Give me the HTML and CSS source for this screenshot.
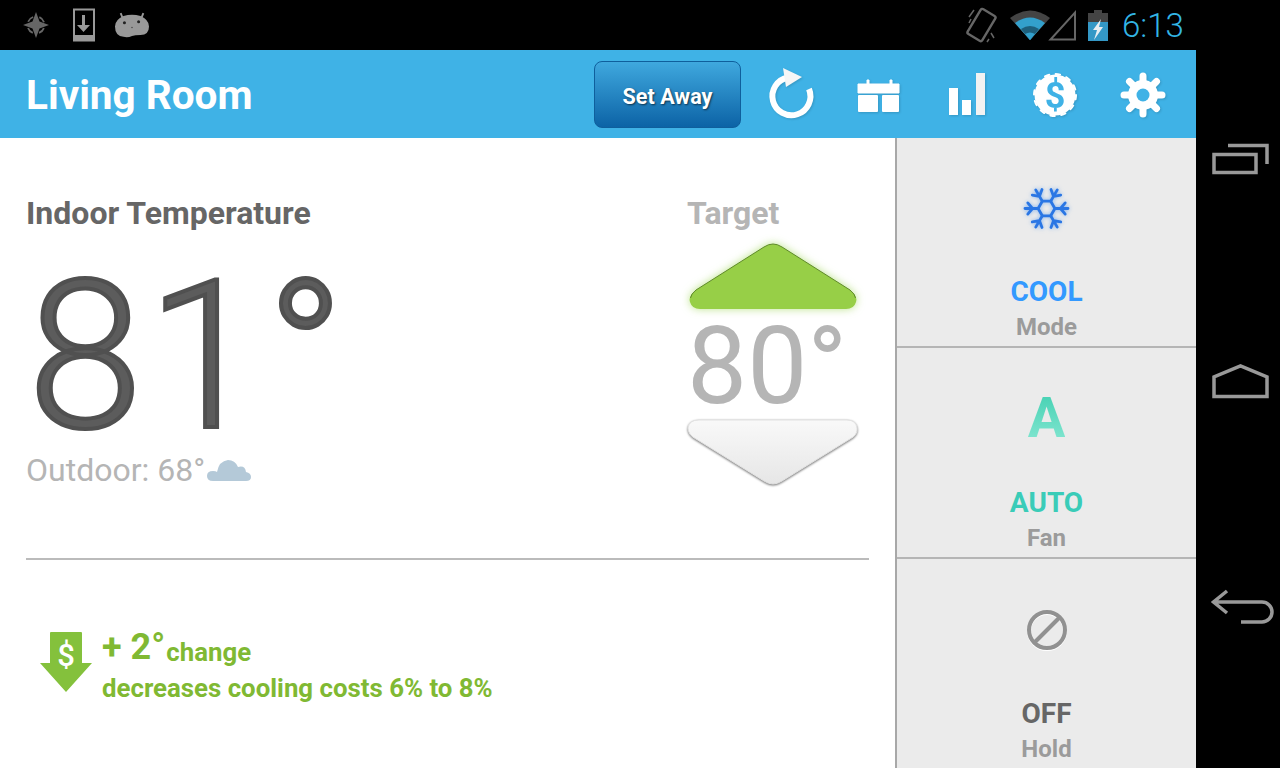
FILE: index.html
```html
<!DOCTYPE html>
<html lang="en">

<head>
    <meta charset="UTF-8">
    <title>Living Room</title>
    <link rel="stylesheet" href="styles.css">
</head>

<body>
    <div class="screen">
        <!-- status bar -->
        <div class="status-bar">
            <svg class="ic-compass" width="28" height="28" viewBox="0 0 28 28">
                <circle cx="14" cy="14" r="8.5" fill="none" stroke="#666" stroke-width="1.8" stroke-dasharray="7 6.35" stroke-dashoffset="-3.18"/>
                <path d="M14 1 L17.5 10.5 L27 14 L17.5 17.5 L14 27 L10.5 17.5 L1 14 L10.5 10.5 Z" fill="#666"/>
            </svg>
            <svg class="ic-download" width="24" height="34" viewBox="0 0 24 34">
                <path d="M2 1.5 H22 V32 H2 Z" fill="none" stroke="#999" stroke-width="2"/>
                <rect x="1" y="27" width="22" height="6.5" fill="#999"/>
                <path d="M10 7 H13 V17 H18 L11.5 24 L5 17 H10 Z" fill="#999"/>
            </svg>
            <svg class="ic-android" width="34" height="27" viewBox="0 0 36 28">
                <path d="M8 6 L6 1 M28 6 L30 1" stroke="#999" stroke-width="2"/>
                <path d="M9 4 Q18 1 27 4 Q36 8 36 15 Q36 24 27 24 Q21 24 18 25 Q14 27 9 26 Q0 25 0 15 Q0 8 9 4 Z" fill="#999"/>
                <circle cx="10" cy="11" r="1.6" fill="#222"/>
                <circle cx="25" cy="10" r="1.6" fill="#222"/>
                <circle cx="18" cy="16" r="0.8" fill="#444"/>
            </svg>

            <div class="status-spacer"></div>

            <svg class="ic-vibrate" width="32" height="34" viewBox="0 0 32 34">
                <rect x="6" y="2.5" width="17" height="29" rx="2" transform="rotate(31 14.5 17)" fill="none" stroke="#666" stroke-width="2.4"/>
                <path d="M7 2 L2 9 M4 11 L2 15 M24 25 L27 30 M22 31 L20 34" stroke="#666" stroke-width="1.5"/>
            </svg>
            <svg class="ic-wifi" width="40" height="32" viewBox="0 0 40 32">
                <path d="M20 31 L0 9 Q20 -6 40 9 Z" fill="#444"/>
                <path d="M20 31 L5 14 Q20 3 35 14 Z" fill="#33a0cc"/>
                <path d="M20 31 L11 20 Q20 14 29 20 Z" fill="#1d5f7c"/>
                <path d="M20 31 L15 25 Q20 22 25 25 Z" fill="#33a0cc"/>
            </svg>
            <svg class="ic-signal" width="29" height="32" viewBox="0 0 29 32">
                <path d="M27 3.5 V30.5 H2.5 Z" fill="none" stroke="#666" stroke-width="2"/>
            </svg>
            <svg class="ic-battery" width="20" height="31" viewBox="0 0 20 31">
                <path d="M6 0 H14 V3 H20 V31 H0 V3 H6 Z" fill="#444"/>
                <rect y="12" width="20" height="19" fill="#3498c6"/>
                <path d="M13 9 L5 20 H9 L6 30 L15 17 H11 L13 9 Z" fill="#e8eef2"/>
            </svg>
            <span class="clock">6:13</span>
        </div>

        <!-- action bar -->
        <header class="action-bar">
            <h1 class="room-title">Living Room</h1>
            <button class="away-btn" type="button">Set Away</button>

            <div class="action-icon">
                <svg width="48" height="48" viewBox="0 0 48 48">
                    <path d="M21 7.5 A19 19 0 1 0 42 19" fill="none" stroke="#fff" stroke-width="6"/>
                    <path d="M16 -2 L35 7 L19 17 Z" fill="#f6f6f6"/>
                </svg>
            </div>
            <div class="action-icon action-calendar">
                <svg width="48" height="48" viewBox="0 0 48 48">
                    <path d="M13 10 H15 V14 H36 V10 H38 V14 H45 V23 H4 V14 H13 Z" fill="#fff" stroke="#fff" stroke-linejoin="round"/>
                    <rect x="4" y="25" width="20" height="17" rx="1" fill="#fff"/>
                    <rect x="28" y="25" width="17" height="17" rx="1" fill="#fff"/>
                </svg>
            </div>
            <div class="action-icon">
                <svg width="48" height="48" viewBox="0 0 48 48">
                    <rect x="6" y="18" width="9" height="27" fill="#fff"/>
                    <rect x="19" y="30" width="9" height="15" fill="#fff"/>
                    <rect x="33" y="3" width="9" height="42" fill="#f2f2f2"/>
                </svg>
            </div>
            <div class="action-icon">
                <svg width="48" height="48" viewBox="0 0 48 48">
                    <circle cx="24" cy="25" r="20.5" fill="#fff"/>
                    <circle cx="24" cy="25" r="21" fill="none" stroke="#fff" stroke-width="2" stroke-linecap="round" stroke-dasharray="4.5 6.5"/>
                    <text class="badge-dollar" x="24" y="38" text-anchor="middle">$</text>
                </svg>
            </div>
            <div class="action-icon">
                <svg width="48" height="48" viewBox="0 0 48 48">
                    <g stroke="#fff" stroke-width="7" stroke-linecap="round">
                        <path d="M24 6 V44 M5 25 H43 M10.5 11.5 L37.5 38.5 M37.5 11.5 L10.5 38.5"/>
                    </g>
                    <circle cx="24" cy="25" r="15" fill="#fff"/>
                    <circle cx="24" cy="25" r="6.5" fill="#3fb2e6"/>
                </svg>
            </div>
        </header>

        <div class="main">
            <section class="content">
                <div class="temps">
                    <div class="indoor">
                        <h2 class="label-indoor">Indoor Temperature</h2>
                        <div class="big-temp">81°</div>
                        <div class="outdoor">
                            <span>Outdoor: 68°</span>
                            <svg width="44" height="24" viewBox="0 0 44 24">
                                <path d="M6 23 Q0 23 0 18 Q0 13 6 13 Q9 13 10 14 Q12 3 21 2 Q28 2 31 9 Q38 7 39 14 Q44 15 44 19 Q44 23 39 23 Z" fill="#b4c9d8"/>
                            </svg>
                        </div>
                    </div>
                    <div class="target">
                        <h2 class="label-target">Target</h2>
                        <svg class="arrow-up" width="190" height="86" viewBox="0 0 190 86">
                            <path d="M86 13 Q95 7 104 13 L172 56 Q180 62 178 68 Q176 75 168 75 H22 Q14 75 12 68 Q10 62 18 56 Z" fill="#97cf47"/>
                            <path d="M12.5 64 Q13 60 18 56 L86 13 Q95 7 104 13 L172 56 Q177 60 177.5 64" fill="none" stroke="#5f8a2a" stroke-width="1"/>
                        </svg>
                        <div class="target-temp">80°</div>
                        <svg class="arrow-down" width="190" height="76" viewBox="0 0 190 76">
                            <defs>
                                <linearGradient id="downFill" x1="0" y1="0" x2="0" y2="1">
                                    <stop offset="0" stop-color="#f9f9f9"/>
                                    <stop offset="1" stop-color="#e6e6e6"/>
                                </linearGradient>
                            </defs>
                            <path d="M21 2 H169 Q178 2 179 10 Q180 17 172 21 L104 63 Q95 69 86 63 L18 21 Q10 17 10 10 Q11 2 21 2 Z" fill="url(#downFill)" stroke="#e2e2e2" stroke-width="1"/>
                        </svg>
                    </div>
                </div>
                <hr class="divider">
                <div class="savings">
                    <svg class="savings-arrow" width="54" height="62" viewBox="0 0 54 62">
                        <path d="M12 1 H42 Q43 1 43 2 V32 H53 L27 61 L1 32 H11 V2 Q11 1 12 1 Z" fill="#84c13c"/>
                        <text class="arrow-dollar" x="27" y="35" text-anchor="middle">$</text>
                    </svg>
                    <div class="savings-text">
                        <div class="savings-head"><span class="savings-big">+ 2°</span>change</div>
                        <div class="savings-sub">decreases cooling costs 6% to 8%</div>
                    </div>
                </div>
            </section>

            <aside class="sidebar">
                <div class="panel">
                    <div class="panel-icon">
                        <svg class="snowflake" width="47" height="43" viewBox="-25 -23 50 46">
                            <defs>
                                <g id="flakeArm">
                                    <path d="M9 0 H23 M15 0 L20 -6 M15 0 L20 6"/>
                                </g>
                            </defs>
                            <g fill="none" stroke="#2a76e4" stroke-width="3" stroke-linecap="round">
                                <path d="M9 0 L4.5 7.8 L-4.5 7.8 L-9 0 L-4.5 -7.8 L4.5 -7.8 Z"/>
                                <use href="#flakeArm"/>
                                <use href="#flakeArm" transform="rotate(60)"/>
                                <use href="#flakeArm" transform="rotate(120)"/>
                                <use href="#flakeArm" transform="rotate(180)"/>
                                <use href="#flakeArm" transform="rotate(240)"/>
                                <use href="#flakeArm" transform="rotate(300)"/>
                            </g>
                        </svg>
                    </div>
                    <div class="panel-value cool">COOL</div>
                    <div class="panel-label">Mode</div>
                </div>
                <div class="panel">
                    <div class="panel-icon"><span class="fan-a">A</span></div>
                    <div class="panel-value auto">AUTO</div>
                    <div class="panel-label">Fan</div>
                </div>
                <div class="panel">
                    <div class="panel-icon">
                        <svg width="42" height="42" viewBox="0 0 42 42">
                            <circle cx="21" cy="22" r="18" fill="none" stroke="#fff" stroke-width="4"/>
                            <circle cx="21" cy="21" r="18" fill="none" stroke="#919191" stroke-width="4"/>
                            <path d="M9 33 L33 9" stroke="#919191" stroke-width="4"/>
                        </svg>
                    </div>
                    <div class="panel-value off">OFF</div>
                    <div class="panel-label">Hold</div>
                </div>
            </aside>
        </div>
    </div>

    <!-- android nav buttons -->
    <nav class="nav-bar">
        <svg class="nav-recent" width="60" height="40" viewBox="0 0 60 40">
            <path d="M17 6.5 H56 V25" fill="none" stroke="#999" stroke-width="3.5"/>
            <rect x="3" y="15.5" width="42" height="18" fill="none" stroke="#999" stroke-width="3.5"/>
        </svg>
        <svg class="nav-home" width="60" height="40" viewBox="0 0 60 40">
            <path d="M3 36.5 V17 L29.5 6 L56 17 V36.5 Z" fill="none" stroke="#999" stroke-width="3.5"/>
        </svg>
        <svg class="nav-back" width="72" height="40" viewBox="0 0 72 40">
            <path d="M16 4 L2.5 15 L16 26 M2.5 15 H51 A10 10 0 0 1 51 35 H30" fill="none" stroke="#999" stroke-width="3.5"/>
        </svg>
    </nav>
</body>

</html>
```

FILE: styles.css
```css
* {
    box-sizing: border-box;
}

html,
body {
    margin: 0;
    height: 768px;
    overflow: hidden;
}

body {
    display: flex;
    width: 1280px;
    background-color: #000;
    font-family: Roboto, sans-serif;
}

h1,
h2 {
    margin: 0;
}

svg {
    display: block;
    flex-shrink: 0;
    overflow: visible;
}

.screen {
    width: 1196px;
    height: 768px;
    display: flex;
    flex-direction: column;
}

/* status bar */
.status-bar {
    height: 50px;
    flex-shrink: 0;
    display: flex;
    align-items: center;
    padding-left: 22px;
    background-color: #000;
}

.ic-download {
    margin-left: 22px;
}

.ic-android {
    margin-left: 19px;
}

.status-spacer {
    flex: 1;
}

.ic-wifi {
    margin-left: 11px;
}

.ic-signal {
    margin-left: -2px;
}

.ic-battery {
    margin-left: 11px;
}

.clock {
    width: 74px;
    margin-left: 14px;
    padding-right: 12px;
    color: #33b5e5;
    font-size: 33px;
    font-weight: 300;
}

/* action bar */
.action-bar {
    height: 88px;
    flex-shrink: 0;
    display: flex;
    align-items: center;
    padding: 0 9px 0 26px;
    background-color: #3fb2e6;
}

.room-title {
    flex: 1;
    padding-top: 2px;
    color: #fff;
    font-size: 40.5px;
    font-weight: 700;
}

.away-btn {
    width: 147px;
    height: 67px;
    margin: 1px 6px 0 0;
    padding-top: 4px;
    border: 1px solid #0f5f9c;
    border-radius: 8px;
    background: linear-gradient(#3fa8de, #0c63a6);
    color: #fff;
    font-family: Roboto, sans-serif;
    font-size: 21.6px;
    font-weight: 700;
    text-shadow: 1px 1px 2px rgba(0, 0, 0, 0.6);
}

.action-icon {
    width: 88px;
    display: flex;
    justify-content: center;
}

.action-calendar svg {
    margin-left: -2px;
}

.action-icon svg {
    filter: drop-shadow(1px 1px 1px rgba(0, 0, 0, 0.15));
}

.badge-dollar {
    fill: #3fb2e6;
    font-family: Roboto, sans-serif;
    font-size: 36px;
    font-weight: 700;
}

/* main area */
.main {
    height: 630px;
    display: flex;
    background-color: #fff;
}

.content {
    width: 895px;
    padding: 0 26px;
}

.temps {
    height: 420px;
    display: flex;
    justify-content: space-between;
}

.label-indoor,
.label-target {
    font-size: 32px;
    font-weight: 700;
    line-height: 36px;
}

.label-indoor {
    padding-top: 57px;
    box-sizing: content-box;
    color: #666;
}

.big-temp {
    height: 186px;
    margin-top: 33px;
    padding-left: 2px;
    color: #5c5c5c;
    font-size: 206px;
    font-weight: 300;
    letter-spacing: 5px;
    line-height: 186px;
    -webkit-text-stroke: 4px #505050;
}

.outdoor {
    display: flex;
    align-items: center;
    gap: 2px;
    color: #b5b5b5;
    font-size: 32px;
    font-weight: 400;
    line-height: 40px;
}

.target {
    width: 182px;
    padding-top: 57px;
}

.label-target {
    color: #b5b5b5;
}

.arrow-up {
    margin: 3px 0 0 -9px;
    filter: drop-shadow(0 0 4px rgba(160, 215, 90, 0.7));
}

.target-temp {
    height: 106px;
    margin-top: -8px;
    color: #b5b5b5;
    font-size: 107px;
    font-weight: 400;
    line-height: 110px;
}

.arrow-down {
    margin-left: -9px;
    filter: drop-shadow(0 1px 1px rgba(0, 0, 0, 0.55));
}

.divider {
    height: 2px;
    margin: 0;
    border: 0;
    background-color: #bbb;
}

.savings {
    display: flex;
    align-items: flex-start;
    gap: 9px;
    padding: 71px 0 0 13px;
}

.savings-text {
    color: #80b933;
    font-size: 25.8px;
    font-weight: 700;
}

.savings-head {
    margin-top: -6px;
    line-height: 44px;
}

.savings-big {
    margin-right: 1px;
    font-size: 36px;
    vertical-align: 2px;
}

.savings-sub {
    margin-top: -3px;
    line-height: 34px;
}

.arrow-dollar {
    fill: #fff;
    font-family: Roboto, sans-serif;
    font-size: 31px;
    font-weight: 500;
}

/* right side panels */
.sidebar {
    width: 301px;
    display: flex;
    flex-direction: column;
    border-left: 2px solid #a8a8a8;
    background-color: #ebebeb;
}

.panel {
    height: 210px;
    padding-top: 28px;
    border-bottom: 2px solid #b5b5b5;
    display: flex;
    flex-direction: column;
    align-items: center;
    text-align: center;
}

.panel:nth-child(2) {
    height: 211px;
}

.panel:last-child {
    height: 209px;
    padding-top: 29px;
    border-bottom: 0;
}

.panel-icon {
    height: 84px;
    display: flex;
    align-items: center;
    justify-content: center;
}

.snowflake {
    filter: drop-shadow(0 0 2px rgba(60, 140, 240, 0.6));
}

.panel-value {
    margin-top: 25px;
    font-size: 28px;
    font-weight: 700;
    line-height: 34px;
}

.panel:nth-child(2) .panel-value {
    margin-top: 26px;
}

.panel-label {
    margin-top: 2px;
    color: #9b9b9b;
    font-size: 24px;
    font-weight: 700;
    line-height: 32px;
}

.cool {
    color: #3399ff;
}

.auto {
    color: #3accb8;
}

.off {
    color: #666;
}

.fan-a {
    background: linear-gradient(#3fcfb0, #8ae8d4);
    -webkit-background-clip: text;
    background-clip: text;
    color: transparent;
    font-size: 56px;
    font-weight: 700;
    line-height: 60px;
}

/* nav bar */
.nav-bar {
    width: 84px;
    display: flex;
    flex-direction: column;
    align-items: flex-start;
    padding: 139px 0 0 15px;
    background-color: #000;
}

.nav-home {
    margin-top: 181px;
}

.nav-back {
    margin-top: 187px;
}
```
